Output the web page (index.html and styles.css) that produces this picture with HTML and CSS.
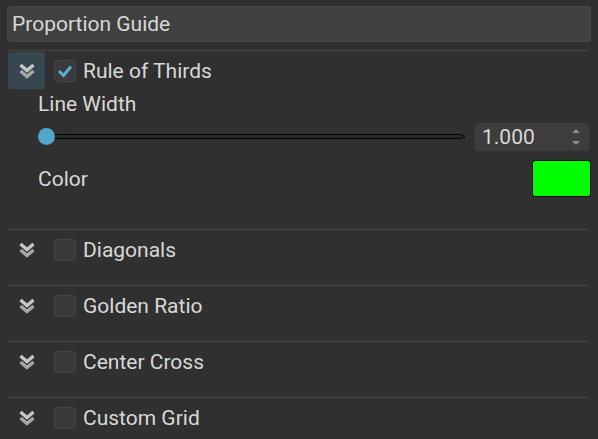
FILE: index.html
```html
<!DOCTYPE html>
<html>
<head>
<meta charset="utf-8">
<link rel="stylesheet" href="styles.css">
</head>
<body>
<div class="panel">
  <div class="title">Proportion Guide</div>
  <div class="sections">
    <div class="section">
      <div class="sec-head">
        <div class="expander active">
          <svg width="16" height="16" viewBox="0 0 16 16"><polyline class="chev1" points="1.5,2 8,7.5 14.5,2"/><polyline class="chev2" points="1.5,8 8,13.5 14.5,8"/></svg>
        </div>
        <div class="check checked">
          <svg width="22" height="22" viewBox="0 0 22 22"><polyline points="5,11 9.5,15.5 17,6.5"/></svg>
        </div>
        <span class="label">Rule of Thirds</span>
      </div>
      <div class="sec-body">
        <div class="field-label">Line Width</div>
        <div class="slider-row">
          <div class="slider">
            <div class="handle"></div>
            <svg class="track" width="420" height="6" viewBox="0 0 420 6" preserveAspectRatio="none"><polygon points="0,0.5 415,0.5 419,2.5 415,4.5 0,4.5"/></svg>
          </div>
          <div class="spin">
            <span class="spin-val">1.000</span>
            <div class="spin-arrows">
              <svg width="10" height="6" viewBox="0 0 10 6"><polygon points="1,5 5,1 9,5"/></svg>
              <svg width="10" height="6" viewBox="0 0 10 6"><polygon points="1,1 5,5 9,1"/></svg>
            </div>
          </div>
        </div>
        <div class="color-row">
          <span class="field-text">Color</span>
          <div class="swatch"></div>
        </div>
      </div>
    </div>
    <div class="section">
      <div class="sec-head">
        <div class="expander">
          <svg width="16" height="16" viewBox="0 0 16 16"><polyline class="chev1" points="1.5,2 8,7.5 14.5,2"/><polyline class="chev2" points="1.5,8 8,13.5 14.5,8"/></svg>
        </div>
        <div class="check"></div>
        <span class="label">Diagonals</span>
      </div>
    </div>
    <div class="section">
      <div class="sec-head">
        <div class="expander">
          <svg width="16" height="16" viewBox="0 0 16 16"><polyline class="chev1" points="1.5,2 8,7.5 14.5,2"/><polyline class="chev2" points="1.5,8 8,13.5 14.5,8"/></svg>
        </div>
        <div class="check"></div>
        <span class="label">Golden Ratio</span>
      </div>
    </div>
    <div class="section">
      <div class="sec-head">
        <div class="expander">
          <svg width="16" height="16" viewBox="0 0 16 16"><polyline class="chev1" points="1.5,2 8,7.5 14.5,2"/><polyline class="chev2" points="1.5,8 8,13.5 14.5,8"/></svg>
        </div>
        <div class="check"></div>
        <span class="label">Center Cross</span>
      </div>
    </div>
    <div class="section">
      <div class="sec-head">
        <div class="expander">
          <svg width="16" height="16" viewBox="0 0 16 16"><polyline class="chev1" points="1.5,2 8,7.5 14.5,2"/><polyline class="chev2" points="1.5,8 8,13.5 14.5,8"/></svg>
        </div>
        <div class="check"></div>
        <span class="label">Custom Grid</span>
      </div>
    </div>
  </div>
</div>
</body>
</html>
```
FILE: styles.css
```css
html, body {
  margin: 0;
  padding: 0;
}
body {
  background: #303030;
  width: 598px;
  height: 439px;
  overflow: hidden;
  font-family: Roboto, "Liberation Sans", sans-serif;
  font-size: 21px;
  color: #d8d8d8;
}
.panel {
  padding: 6px 7px 0 7px;
}
.title {
  height: 34px;
  line-height: 34px;
  background: #404040;
  border: 1px solid #484848;
  border-radius: 3px;
  padding-left: 4px;
}
.sections {
  margin-top: 8px;
}
.section {
  border-top: 1px solid #474747;
  padding-top: 1px;
  padding-bottom: 17px;
  margin-right: 2px;
}
.sec-head {
  display: flex;
  align-items: center;
  height: 37px;
  padding-left: 1px;
}
.expander {
  width: 37px;
  height: 37px;
  display: flex;
  align-items: center;
  justify-content: center;
  border-radius: 2px;
}
.expander.active {
  background: #37474f;
}
.expander svg {
  display: block;
  margin-top: 1px;
}
.chev1, .chev2 {
  fill: none;
  stroke-width: 3.4;
  stroke-linejoin: miter;
}
.chev1 { stroke: #c6c6c6; }
.chev2 { stroke: #a8a8a8; }
.check {
  width: 20px;
  height: 20px;
  margin-left: 9px;
  background: #3a3a3a;
  border: 1px solid #434343;
  border-radius: 3px;
}
.check svg {
  display: block;
  margin: -1px;
}
.check polyline {
  fill: none;
  stroke: #5aaed6;
  stroke-width: 3;
}
.label {
  margin-left: 7px;
}
.section:first-child {
  padding-bottom: 0;
}
.sec-body {
  padding-left: 31px;
  padding-bottom: 32px;
}
.field-label {
  height: 30px;
  line-height: 30px;
}
.slider-row {
  margin-top: 4px;
  height: 28px;
  display: flex;
  align-items: center;
}
.slider {
  flex: 1;
  display: flex;
  align-items: center;
  height: 28px;
  margin-right: 9px;
}
.handle {
  width: 17px;
  height: 17px;
  border-radius: 50%;
  background: #52a6cd;
  flex: none;
  margin-top: -1px;
}
.track {
  flex: 1;
  display: block;
  margin-left: -9px;
  position: relative;
  z-index: -1;
}
.track polygon {
  fill: #2a2a2a;
  stroke: #000;
  stroke-width: 1;
}
.spin {
  width: 109px;
  height: 28px;
  background: #3d3d3d;
  border-radius: 3px;
  display: flex;
  align-items: center;
  padding-left: 7px;
}
.spin-val {
  flex: 1;
}
.spin-arrows {
  width: 26px;
  display: flex;
  flex-direction: column;
  align-items: center;
  gap: 6px;
}
.spin-arrows svg {
  display: block;
}
.spin-arrows polygon {
  fill: #8c8c8c;
}
.color-row {
  margin-top: 9px;
  height: 37px;
  display: flex;
  align-items: center;
  justify-content: space-between;
}
.swatch {
  width: 57px;
  height: 35px;
  background: #00ff00;
  border: 1px solid #000;
  border-radius: 3px;
  margin-right: -2px;
}
```
